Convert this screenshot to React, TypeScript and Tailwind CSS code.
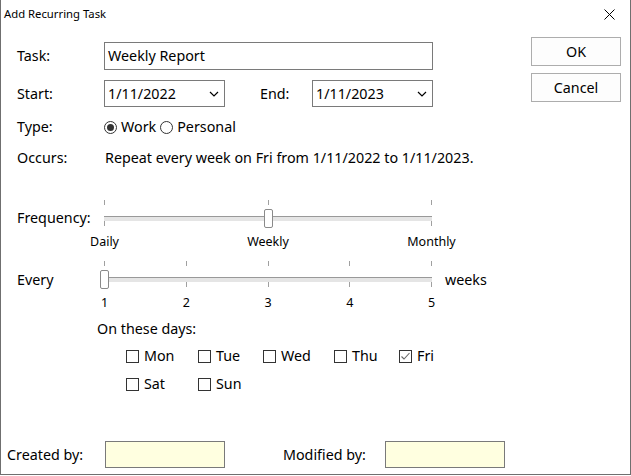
import React from 'react';

const font = { fontFamily: '"Noto Sans", "Open Sans", sans-serif' };

const Chevron = () => (
  <svg width="10" height="6" viewBox="0 0 10 6" className="shrink-0">
    <polyline points="1,1 5,5 9,1" fill="none" stroke="#000" strokeWidth="1.2" />
  </svg>
);

const DateSelect = ({ value }: { value: string }) => (
  <div className="flex h-[27px] w-[121px] items-center justify-between border border-[#7a7a7a] bg-white pl-[3px] pr-[5px]">
    <span>{value}</span>
    <Chevron />
  </div>
);

const Radio = ({ checked, label }: { checked?: boolean; label: string }) => (
  <label className="flex items-center gap-[4px]">
    <span className="flex h-[13px] w-[13px] items-center justify-center rounded-full border border-[#333] bg-white">
      {checked && <span className="h-[7px] w-[7px] rounded-full bg-[#333]" />}
    </span>
    <span>{label}</span>
  </label>
);

const Check = ({ checked, label }: { checked?: boolean; label: string }) => (
  <label className="flex items-center gap-[5px]">
    <span className="flex h-[13px] w-[13px] items-center justify-center border border-[#333] bg-white">
      {checked && (
        <svg width="11" height="11" viewBox="0 0 11 11">
          <polyline points="1.5,5.5 4,8 9.5,2" fill="none" stroke="#666" strokeWidth="1.1" />
        </svg>
      )}
    </span>
    <span>{label}</span>
  </label>
);

// ticks + track + labels, thumb sits on top of the track
const Slider = ({ labels, pos }: { labels: string[]; pos: number }) => {
  const ticks = labels.map((_, i) => i);
  return (
    <div className="relative w-[328px]">
      <div className="flex h-[5px] justify-between">
        {ticks.map((i) => (
          <span key={i} className="w-px bg-[#a0a0a0]" />
        ))}
      </div>
      <div className="mt-[11px] h-[5px] border-t border-[#999] bg-[#e5e5e5]" />
      <div className="flex h-[5px] justify-between">
        {ticks.map((i) => (
          <span key={i} className={i === pos ? 'w-px' : 'w-px bg-[#a0a0a0]'} />
        ))}
      </div>
      <div className="mt-[6px] flex h-[20px] justify-between text-[12.5px] leading-[20px]">
        {labels.map((l) => (
          <span key={l} className="flex w-px justify-center whitespace-nowrap">
            {l}
          </span>
        ))}
      </div>
      <div
        className="absolute top-[9px] h-[19px] w-[9px] -translate-x-[5px] rounded-[2px] border border-[#8a8a8a] bg-white"
        style={{ left: `${(pos / (labels.length - 1)) * 327 + 1}px` }}
      />
    </div>
  );
};

export default function App() {
  return (
    <div style={font} className="flex h-[475px] w-[631px] flex-col border-x border-b border-[#6f6f6f] bg-white text-[14.3px] text-black">
      <div className="flex h-[28px] items-center justify-between pl-[3px] pr-[15px]">
        <span className="text-[11.3px]">Add Recurring Task</span>
        <svg width="11" height="11" viewBox="0 0 11 11">
          <path d="M0.5 0.5 L10.5 10.5 M10.5 0.5 L0.5 10.5" stroke="#000" strokeWidth="1" />
        </svg>
      </div>

      <div className="flex flex-1">
        <div className="flex flex-1 flex-col pl-[16px]">
          <div className="mt-[14px] flex h-[28px] items-center">
            <span className="w-[87px]">Task:</span>
            <div className="flex h-[28px] w-[329px] items-center border border-[#7a7a7a] pl-[3px]">Weekly Report</div>
          </div>

          <div className="mt-[10px] flex h-[27px] items-center">
            <span className="w-[87px]">Start:</span>
            <DateSelect value="1/11/2022" />
            <span className="ml-[35px] w-[52px]">End:</span>
            <DateSelect value="1/11/2023" />
          </div>

          <div className="mt-[8px] flex h-[24px] items-center">
            <span className="w-[87px]">Type:</span>
            <div className="flex items-center gap-[4px]">
              <Radio checked label="Work" />
              <Radio label="Personal" />
            </div>
          </div>

          <div className="mt-[7px] flex h-[24px] items-center">
            <span className="w-[88px]">Occurs:</span>
            <span>Repeat every week on Fri from 1/11/2022 to 1/11/2023.</span>
          </div>

          <div className="mt-[30px] flex items-start">
            <span className="mt-[8px] w-[87px] leading-[20px]">Frequency:</span>
            <Slider labels={['Daily', 'Weekly', 'Monthly']} pos={1} />
          </div>

          <div className="mt-[9px] flex items-start">
            <span className="mt-[9px] w-[87px] leading-[20px]">Every</span>
            <Slider labels={['1', '2', '3', '4', '5']} pos={0} />
            <span className="ml-[13px] mt-[9px] leading-[20px]">weeks</span>
          </div>

          <div className="ml-[80px] mt-[6px] flex h-[20px] items-center">On these days:</div>

          <div className="ml-[109px] mt-[5px] grid grid-cols-[72px_65px_71px_65px_auto] grid-rows-[24px_24px] gap-y-[4px]">
            <Check label="Mon" />
            <Check label="Tue" />
            <Check label="Wed" />
            <Check label="Thu" />
            <Check checked label="Fri" />
            <Check label="Sat" />
            <Check label="Sun" />
          </div>
        </div>

        <div className="flex flex-col gap-[7px] pr-[9px] pt-[9px]">
          <button className="h-[29px] w-[90px] border border-[#adadad] bg-[#fdfdfd]">OK</button>
          <button className="h-[29px] w-[90px] border border-[#adadad] bg-[#fdfdfd]">Cancel</button>
        </div>
      </div>

      <div className="mb-[6px] flex h-[27px] items-center pl-[6px]">
        <span className="w-[98px]">Created by:</span>
        <div className="h-[27px] w-[120px] border border-[#7a7a7a] bg-[#ffffe0]" />
        <span className="ml-[58px] w-[102px]">Modified by:</span>
        <div className="h-[27px] w-[120px] border border-[#7a7a7a] bg-[#ffffe0]" />
      </div>
    </div>
  );
}
